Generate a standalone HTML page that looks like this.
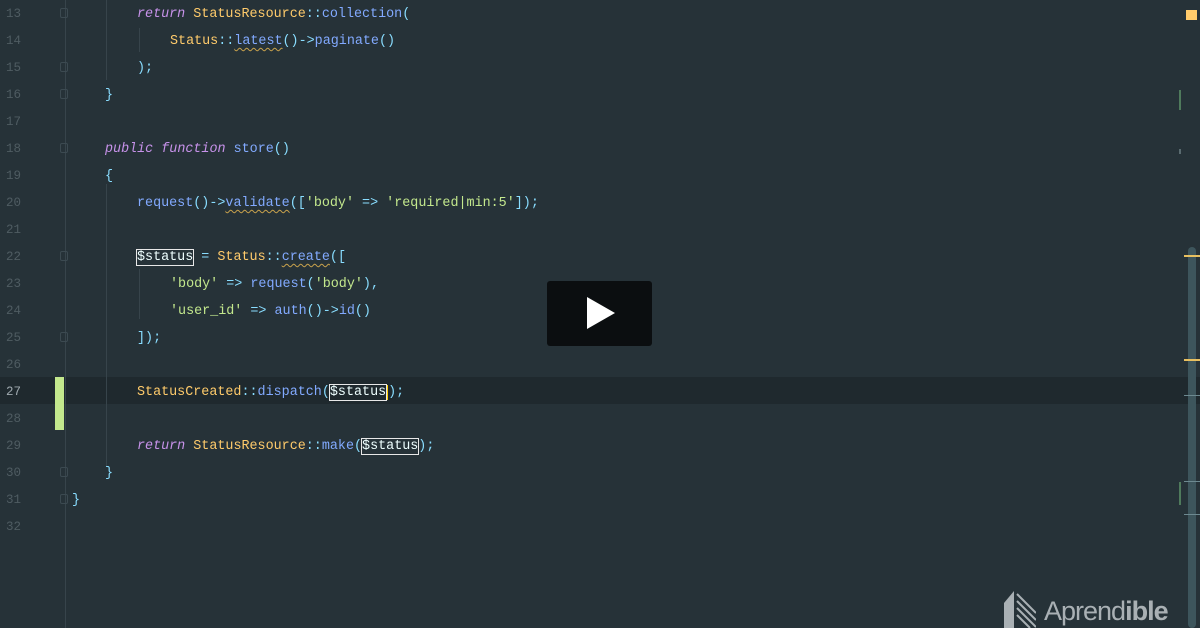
<!DOCTYPE html>
<html><head><meta charset="utf-8"><style>
body{margin:0;width:1200px;height:628px;background:#263238;overflow:hidden;position:relative;font-family:"Liberation Mono",monospace;}
.l{position:absolute;left:0;width:1200px;height:27px;line-height:27px;font-size:13.4px;white-space:pre;}
.t{position:absolute;left:0;top:2px;width:1200px;height:27px}
.n{position:absolute;left:6px;color:#4f5c62;font-size:12.5px;}
.c{position:absolute;}
.k{color:#c792ea;font-style:italic}
.f{color:#82aaff}
.y{color:#ffcb6b}
.s{color:#c3e88d}
.p{color:#89ddff}
.w{color:#eeffff}
.u{text-decoration:underline wavy #c9a24c;text-decoration-thickness:1px;text-underline-offset:3px}
.b{outline:1px solid #e8e8e8;outline-offset:0px}
.g{position:absolute;width:1px;background:#37444b}
.fold{position:absolute;left:60px;width:8px;height:10px;border:1px solid #3c4a51;border-radius:2px;box-sizing:border-box}
</style></head><body>
<div class="l" style="top:377px;height:27px;background:#1f292e"></div>
<div style="position:absolute;left:55px;top:377px;width:9px;height:53px;background:#c3e88d"></div>
<div class="g" style="left:65px;top:0;height:628px"></div>
<div class="g" style="left:106px;top:0;height:80px"></div>
<div class="g" style="left:106px;top:184px;height:282px"></div>
<div class="g" style="left:139px;top:28px;height:24px"></div>
<div class="g" style="left:139px;top:269px;height:50px"></div>
<div class="fold" style="top:8px"></div><div class="fold" style="top:62px"></div><div class="fold" style="top:89px"></div>
<div class="fold" style="top:143px"></div><div class="fold" style="top:251px"></div><div class="fold" style="top:332px"></div>
<div class="fold" style="top:467px"></div><div class="fold" style="top:494px"></div>

<div class="l" style="top:1px"><span class="n">13</span><span class="c" style="left:137px"><span class="k">return</span> <span class="y">StatusResource</span><span class="p">::</span><span class="f">collection</span><span class="p">(</span></span></div>
<div class="l" style="top:28px"><span class="n">14</span><span class="c" style="left:170px"><span class="y">Status</span><span class="p">::</span><span class="f u">latest</span><span class="p">()-&gt;</span><span class="f">paginate</span><span class="p">()</span></span></div>
<div class="l" style="top:55px"><span class="n">15</span><span class="c" style="left:137px"><span class="p">);</span></span></div>
<div class="l" style="top:82px"><span class="n">16</span><span class="c" style="left:105px"><span class="p">}</span></span></div>
<div class="l" style="top:109px"><span class="n">17</span></div>
<div class="l" style="top:136px"><span class="n">18</span><span class="c" style="left:105px"><span class="k">public function</span> <span class="f">store</span><span class="p">()</span></span></div>
<div class="l" style="top:163px"><span class="n">19</span><span class="c" style="left:105px"><span class="p">{</span></span></div>
<div class="l" style="top:190px"><span class="n">20</span><span class="c" style="left:137px"><span class="f">request</span><span class="p">()-&gt;</span><span class="f u">validate</span><span class="p">([</span><span class="s">'body'</span> <span class="p">=&gt;</span> <span class="s">'required|min:5'</span><span class="p">]);</span></span></div>
<div class="l" style="top:217px"><span class="n">21</span></div>
<div class="l" style="top:244px"><span class="n">22</span><span class="c" style="left:137px"><span class="w b">$status</span> <span class="p">=</span> <span class="y">Status</span><span class="p">::</span><span class="f u">create</span><span class="p">([</span></span></div>
<div class="l" style="top:271px"><span class="n">23</span><span class="c" style="left:170px"><span class="s">'body'</span> <span class="p">=&gt;</span> <span class="f">request</span><span class="p">(</span><span class="s">'body'</span><span class="p">),</span></span></div>
<div class="l" style="top:298px"><span class="n">24</span><span class="c" style="left:170px"><span class="s">'user_id'</span> <span class="p">=&gt;</span> <span class="f">auth</span><span class="p">()-&gt;</span><span class="f">id</span><span class="p">()</span></span></div>
<div class="l" style="top:325px"><span class="n">25</span><span class="c" style="left:137px"><span class="p">]);</span></span></div>
<div class="l" style="top:352px"><span class="n">26</span></div>
<div class="l" style="top:379px"><span class="n" style="color:#a0aab0">27</span><span class="c" style="left:137px"><span class="y">StatusCreated</span><span class="p">::</span><span class="f">dispatch</span><span class="p">(</span><span class="w b">$status</span><span class="p" style="border-left:2px solid #ffcc00">);</span></span></div>
<div class="l" style="top:406px"><span class="n">28</span></div>
<div class="l" style="top:433px"><span class="n">29</span><span class="c" style="left:137px"><span class="k">return</span> <span class="y">StatusResource</span><span class="p">::</span><span class="f">make</span><span class="p">(</span><span class="w b">$status</span><span class="p">);</span></span></div>
<div class="l" style="top:460px"><span class="n">30</span><span class="c" style="left:105px"><span class="p">}</span></span></div>
<div class="l" style="top:487px"><span class="n">31</span><span class="c" style="left:72px"><span class="p">}</span></span></div>
<div class="l" style="top:514px"><span class="n">32</span></div>

<div style="position:absolute;left:1186px;top:10px;width:11px;height:10px;background:#ffcb6b"></div>
<div style="position:absolute;left:1179px;top:90px;width:2px;height:20px;background:#4f7a5c"></div>
<div style="position:absolute;left:1179px;top:149px;width:2px;height:5px;background:#5a6b70"></div>
<div style="position:absolute;left:1188px;top:247px;width:8px;height:381px;background:#3d555c;border-radius:4px"></div>
<div style="position:absolute;left:1184px;top:255px;width:16px;height:2px;background:#e8c060"></div>
<div style="position:absolute;left:1184px;top:359px;width:16px;height:2px;background:#e8c060"></div>
<div style="position:absolute;left:1184px;top:395px;width:16px;height:1px;background:#6d8990"></div>
<div style="position:absolute;left:1184px;top:481px;width:16px;height:1px;background:#6d8990"></div>
<div style="position:absolute;left:1184px;top:514px;width:16px;height:1px;background:#6d8990"></div>
<div style="position:absolute;left:1179px;top:482px;width:2px;height:23px;background:#4f7a5c"></div>

<div style="position:absolute;left:547px;top:281px;width:105px;height:65px;background:#0b0e10;border-radius:3px"></div>
<svg style="position:absolute;left:587px;top:297px" width="29" height="33"><polygon points="0,0 28,16 0,32" fill="#fff"/></svg>

<svg style="position:absolute;left:1004px;top:591px" width="32" height="37"><polygon points="0,12 10,0 10,37 0,37" fill="#a9b0b4"/><g stroke="#a9b0b4" stroke-width="2"><line x1="13" y1="3" x2="32" y2="22"/><line x1="13" y1="10" x2="32" y2="29"/><line x1="13" y1="17" x2="32" y2="36"/><line x1="13" y1="24" x2="26" y2="37"/></g></svg>
<div style="position:absolute;left:1044px;top:596px;font-family:'Liberation Sans',sans-serif;font-size:27px;color:#a9b0b4;letter-spacing:-1px;">Aprend<b>ible</b></div>
</body></html>
